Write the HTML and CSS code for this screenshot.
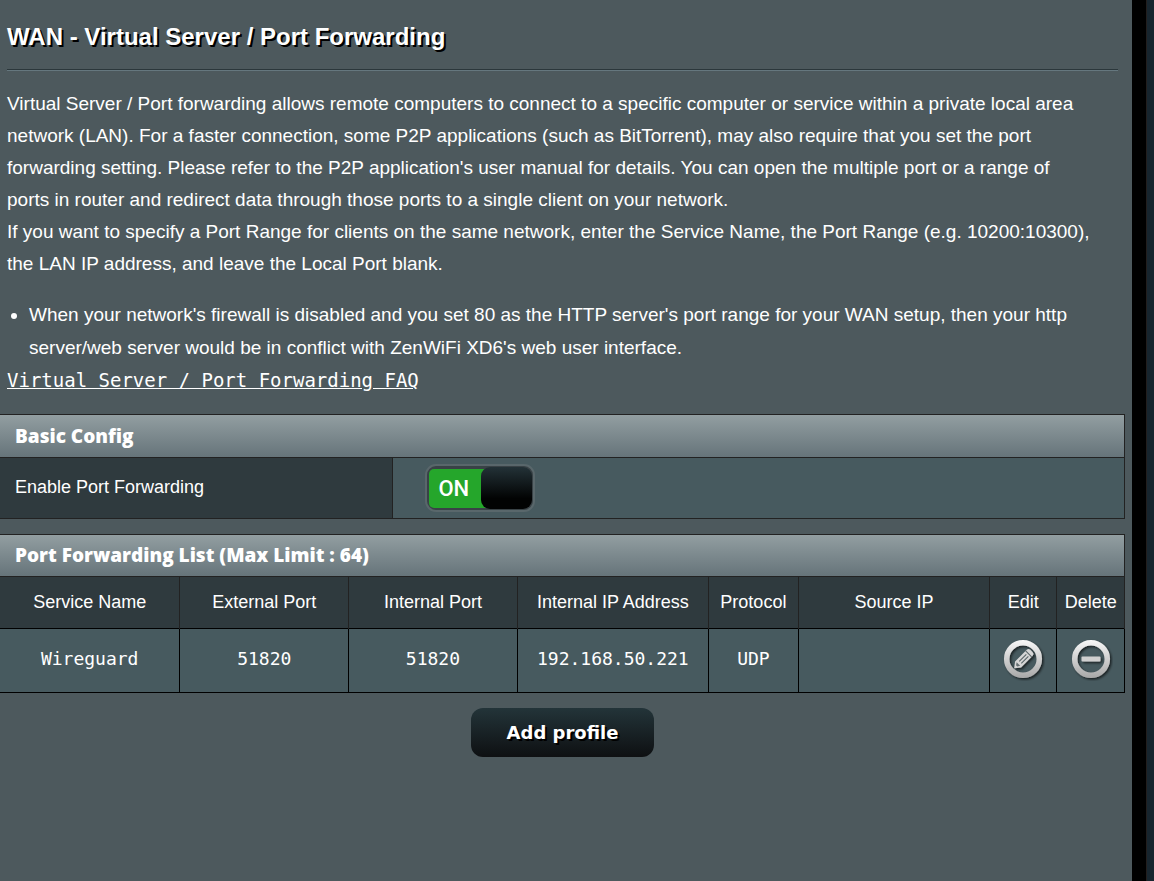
FILE: index.html
```html
<!DOCTYPE html>
<html lang="en">
<head>
<meta charset="utf-8">
<title>WAN - Virtual Server / Port Forwarding</title>
<link rel="stylesheet" href="styles.css">
</head>
<body>
<main class="panel">
  <header class="intro">
    <h1 class="title">WAN - Virtual Server / Port Forwarding</h1>
    <div class="rule"></div>
    <p class="text">Virtual Server / Port forwarding allows remote computers to connect to a specific computer or service within a private local area network (LAN). For a faster connection, some P2P applications (such as BitTorrent), may also require that you set the port forwarding setting. Please refer to the P2P application's user manual for details. You can open the multiple port or a range of<br>ports in router and redirect data through those ports to a single client on your network.<br>If you want to specify a Port Range for clients on the same network, enter the Service Name, the Port Range (e.g. 10200:10300), the LAN IP address, and leave the Local Port blank.</p>
    <ul class="notes">
      <li>When your network's firewall is disabled and you set 80 as the HTTP server's port range for your WAN setup, then your http server/web server would be in conflict with ZenWiFi XD6's web user interface.</li>
    </ul>
    <a class="faq" href="#faq">Virtual Server / Port Forwarding FAQ</a>
  </header>

  <section class="config">
    <h2 class="bar">Basic Config</h2>
    <div class="setting">
      <label class="setting-name" for="enable">Enable Port Forwarding</label>
      <div class="setting-value">
        <span class="switch">
          <input class="switch-input" type="checkbox" id="enable" checked>
          <span class="switch-on">ON</span>
          <span class="switch-knob"></span>
        </span>
      </div>
    </div>
  </section>

  <section class="list">
    <h2 class="bar bar-list">Port Forwarding List (Max Limit : 64)</h2>
    <table class="rules">
      <colgroup>
        <col class="c-name"><col class="c-port"><col class="c-port"><col class="c-ip"><col class="c-proto"><col class="c-ip"><col class="c-act"><col class="c-act">
      </colgroup>
      <thead>
        <tr><th>Service Name</th><th>External Port</th><th>Internal Port</th><th>Internal IP Address</th><th>Protocol</th><th>Source IP</th><th>Edit</th><th>Delete</th></tr>
      </thead>
      <tbody>
        <tr>
          <td>Wireguard</td><td>51820</td><td>51820</td><td>192.168.50.221</td><td>UDP</td><td></td>
          <td><button class="icon" type="button" aria-label="Edit">
            <svg width="44" height="44" viewBox="0 0 44 44">
              <defs>
                <linearGradient id="metal" gradientUnits="userSpaceOnUse" x1="0" y1="2" x2="0" y2="41"><stop offset="0" stop-color="#fafafa"/><stop offset="1" stop-color="#a8a8a8"/></linearGradient>
                <filter id="drop" x="-20%" y="-20%" width="150%" height="150%"><feDropShadow dx="1.5" dy="1.5" stdDeviation="1" flood-color="#000" flood-opacity=".65"/></filter>
              </defs>
              <g filter="url(#drop)">
                <circle cx="22" cy="22" r="16.300" fill="none" stroke="url(#metal)" stroke-width="5.500"/>
                <g transform="translate(22 22.500) rotate(-45)">
                  <path d="M-12.500 0L-7-4.200H9.500a2.500 2.500 0 0 1 2.500 2.500v3.400a2.500 2.500 0 0 1-2.500 2.500H-7z" fill="#d6d6d6"/>
                  <path d="M-9-.800L-6.500-2.500V2.500L-9 .800z" fill="#667073"/>
                  <path d="M-4-1.300H6M-4 1.600H6M8-4.200v8.400" fill="none" stroke="#5a6568" stroke-width="1.100"/>
                </g>
              </g>
            </svg></button></td>
          <td><button class="icon" type="button" aria-label="Delete">
            <svg width="44" height="44" viewBox="0 0 44 44">
              <g filter="url(#drop)">
                <circle cx="22" cy="22" r="16.300" fill="none" stroke="url(#metal)" stroke-width="5.500"/>
                <rect x="12.500" y="19.500" width="19" height="5" rx="1" fill="#d0d0d0"/>
              </g>
            </svg></button></td>
        </tr>
      </tbody>
    </table>
  </section>

  <div class="actions"><button class="add" type="button">Add profile</button></div>
</main>
</body>
</html>
```
FILE: styles.css
```css
* { box-sizing: border-box; }

body {
  margin: 0;
  display: flex;
  min-height: 100vh;
  padding-right: 22px;
  background: linear-gradient(to left, #17252e 7px, #221e1d 7px, #221e1d 8px, #000 8px);
  color: #fff;
  font-family: "Liberation Sans", Arial, sans-serif;
}

.panel {
  flex: 1;
  min-width: 0;
  padding-right: 7px;
  background: #4d595d;
}

.intro { padding: 22px 7px 0; }

.title {
  margin: 0;
  font-size: 24px;
  line-height: 30px;
  text-shadow: 2px 2px 0 #000;
}

.rule {
  height: 2px;
  margin: 17px 0;
  border-top: 1px solid #2b373b;
  border-bottom: 1px solid #65777e;
}

.text, .notes {
  margin: 0;
  font-size: 19px;
  line-height: 32px;
}

.notes {
  margin-top: 18px;
  padding-left: 22px;
  line-height: 33px;
}

.faq {
  display: inline-block;
  color: #fff;
  font: 19px/32px "DejaVu Sans Mono", monospace;
}

.config { margin-top: 18px; }

.list { margin-top: 15px; }

.bar {
  margin: 0;
  padding: 0 15px;
  border: 1px solid #222;
  border-left: 0;
  background: linear-gradient(#929ea1, #66747a);
  font: 800 19px/42px "Open Sans", sans-serif;
}

.bar-list { line-height: 41px; }

.setting {
  display: flex;
  height: 61px;
  border: 1px solid #222;
  border-width: 0 1px 1px 0;
}

.setting-name {
  width: 35%;
  padding: 0 15px;
  border-right: 1px solid #222;
  background: #2f3a3e;
  font-size: 18px;
  line-height: 58px;
}

.setting-value {
  display: flex;
  flex: 1;
  align-items: center;
  padding-left: 32px;
  background: #475a5f;
}

.switch {
  position: relative;
  display: flex;
  width: 110px;
  height: 48px;
  padding: 3px 1px 2px 2px;
  border: 2px solid #59676b;
  border-radius: 11px;
  background: #394246;
}

.switch-input {
  position: absolute;
  inset: 0;
  width: 100%;
  height: 100%;
  margin: 0;
  opacity: 0;
}

.switch-on {
  width: 60px;
  padding-left: 9px;
  border-radius: 5px;
  background: #25a62b;
  font: 500 22px/40px Roboto, sans-serif;
}

.switch-knob {
  width: 52px;
  height: 42px;
  margin: -2px 0 0 -8px;
  border-radius: 9px;
  background: linear-gradient(#233237, #020303 75%);
}

.rules {
  width: 100%;
  table-layout: fixed;
  border-collapse: collapse;
  font-size: 18px;
}

.c-name { width: 16%; }
.c-port { width: 15%; }
.c-ip { width: 17%; }
.c-proto { width: 8%; }
.c-act { width: 6%; }

.rules th {
  height: 51px;
  padding: 0;
  border-right: 1px solid #222;
  background: #2f3a3e;
  font-weight: 400;
  white-space: nowrap;
}

.rules td {
  height: 64px;
  padding: 0 0 3px;
  border: 1px solid #000;
  border-left: 0;
  background: #475a5f;
  font-family: "DejaVu Sans Mono", monospace;
  text-align: center;
}

.icon {
  display: block;
  margin: 0 auto;
  padding: 0;
  border: 0;
  background: none;
}

.icon svg { display: block; }

.actions {
  display: flex;
  justify-content: center;
  padding-top: 15px;
}

.add {
  padding: 0 36px;
  border: 0;
  border-radius: 12px;
  background: linear-gradient(#233439, #0e1012);
  color: #fff;
  font: bold 18px/49px "DejaVu Sans", sans-serif;
  text-shadow: 2px 2px 0 #000;
}
```
